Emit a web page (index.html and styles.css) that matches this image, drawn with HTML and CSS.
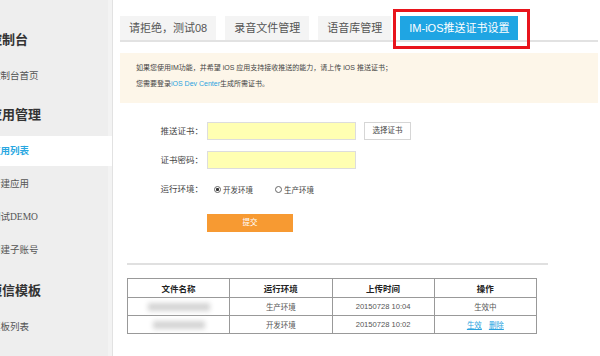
FILE: index.html
```html
<!DOCTYPE html>
<html lang="zh-CN">
<head>
    <meta charset="UTF-8">
    <meta name="viewport" content="width=device-width, initial-scale=1.0">
    <title>IM-iOS推送证书设置</title>
    <link rel="stylesheet" href="styles.css">
</head>
<body>
    <div class="page">
        <div class="sidebar">
            <div class="nav-group">
                <h3 class="nav-title">控制台</h3>
                <a class="nav-item">控制台首页</a>
            </div>
            <div class="nav-group">
                <h3 class="nav-title">应用管理</h3>
                <a class="nav-item active">应用列表</a>
                <a class="nav-item">新建应用</a>
                <a class="nav-item">测试DEMO</a>
                <a class="nav-item">创建子账号</a>
            </div>
            <div class="nav-group">
                <h3 class="nav-title">短信模板</h3>
                <a class="nav-item">模板列表</a>
            </div>
        </div>

        <div class="main">
            <div class="tabs">
                <span class="tab">请拒绝，测试08</span>
                <span class="tab">录音文件管理</span>
                <span class="tab">语音库管理</span>
                <span class="tab tab-active">IM-iOS推送证书设置<span class="mark"></span></span>
            </div>

            <div class="notice">
                <p>如果您使用IM功能，并希望 iOS 应用支持接收推送的能力，请上传 iOS 推送证书；</p>
                <p>您需要登录<a class="link">iOS Dev Center</a>生成所需证书。</p>
            </div>

            <div class="cert-form">
                <label class="form-label">推送证书：</label>
                <div class="form-field">
                    <span class="text-input"></span>
                    <span class="pick-button">选择证书</span>
                </div>
                <label class="form-label">证书密码：</label>
                <div class="form-field">
                    <span class="text-input"></span>
                </div>
                <label class="form-label">运行环境：</label>
                <div class="form-field radios">
                    <span class="radio"><span class="radio-dot checked"></span>开发环境</span>
                    <span class="radio"><span class="radio-dot"></span>生产环境</span>
                </div>
                <span></span>
                <div class="form-field submit-row">
                    <span class="submit-button">提交</span>
                </div>
            </div>

            <div class="divider"></div>

            <table class="cert-table">
                <tr>
                    <th>文件名称</th>
                    <th>运行环境</th>
                    <th>上传时间</th>
                    <th>操作</th>
                </tr>
                <tr>
                    <td><span class="blurred wide"></span></td>
                    <td>生产环境</td>
                    <td class="num">20150728 10:04</td>
                    <td>生效中</td>
                </tr>
                <tr>
                    <td><span class="blurred"></span></td>
                    <td>开发环境</td>
                    <td class="num">20150728 10:02</td>
                    <td><a class="link underline">生效</a><a class="link underline">删除</a></td>
                </tr>
            </table>
        </div>
    </div>
</body>
</html>
```

FILE: styles.css
```css
body {
    margin: 0;
    background: #fff;
    font-family: "Liberation Sans", "Noto Sans CJK SC", sans-serif;
    color: #555;
}

.page {
    display: flex;
    width: 600px;
    height: 356px;
    overflow: hidden;
}

/* left menu, scrolled a little off screen */
.sidebar {
    width: 112px;
    flex-shrink: 0;
    padding-top: 30px;
    background: linear-gradient(to right, #eeeeee 108px, #f3f3f3 108px);
    border-right: 1px solid #e2e2e2;
    overflow: hidden;
}

.nav-group + .nav-group {
    margin-top: 14px;
}

.nav-group:last-child {
    margin-top: 16px;
}

.nav-title {
    margin: 0 0 11px -11px;
    height: 20px;
    line-height: 20px;
    font-size: 13px;
    font-weight: bold;
    color: #333;
    white-space: nowrap;
}

.nav-item {
    display: block;
    height: 30px;
    line-height: 30px;
    margin-bottom: 3px;
    text-indent: -9px;
    font-family: "Liberation Serif", "Noto Sans CJK SC", serif;
    font-size: 9.5px;
    color: #555;
    white-space: nowrap;
}

.nav-item.active {
    background: #fff;
    color: #29a7e1;
    font-weight: bold;
}

.main {
    flex: 1;
    padding: 16px 2px 0 7px;
}

.tabs {
    display: flex;
    gap: 9px;
    border-bottom: 2px solid #e2e2e2;
}

.tab {
    position: relative;
    height: 24px;
    line-height: 24px;
    padding: 0 9px;
    font-size: 11px;
    color: #555;
    background: #f4f4f4;
    white-space: nowrap;
}

.tab-active {
    background: #1fa5e3;
    color: #fff;
}

/* red annotation box */
.mark {
    position: absolute;
    left: -7px;
    top: -7px;
    right: -12px;
    bottom: -9px;
    border: 3px solid #e8141c;
}

.notice {
    margin-top: 11px;
    height: 50px;
    box-sizing: border-box;
    padding: 7px 0 0 16px;
    background: #fdf6e9;
    font-size: 7px;
    color: #444;
}

.notice p {
    margin: 0;
    line-height: 16px;
}

.link {
    color: #2aa3e0;
}

.underline {
    text-decoration: underline;
}

.cert-form {
    display: grid;
    grid-template-columns: 83px auto;
    column-gap: 4px;
    row-gap: 11px;
    margin-top: 19px;
}

.form-label {
    text-align: right;
    line-height: 18px;
    font-size: 8.5px;
    color: #444;
}

.form-field {
    display: flex;
    align-items: center;
    height: 18px;
}

.text-input {
    width: 149px;
    height: 18px;
    box-sizing: border-box;
    border: 1px solid #ddd;
    background: #ffffb2;
}

.pick-button {
    margin-left: 8px;
    width: 47px;
    height: 18px;
    box-sizing: border-box;
    border: 1px solid #d6d6d6;
    background: #fff;
    font-size: 7.5px;
    line-height: 16px;
    text-align: center;
    color: #444;
}

.radios {
    gap: 22px;
    padding-left: 7px;
}

.radio {
    display: flex;
    align-items: center;
    gap: 2px;
    font-size: 7.5px;
    color: #444;
}

.radio-dot {
    width: 5px;
    height: 5px;
    border: 1px solid #666;
    border-radius: 50%;
    background: #fff;
}

.radio-dot.checked {
    background: radial-gradient(circle, #333 1.3px, #fff 1.8px);
}

.submit-row {
    margin-top: 5px;
}

.submit-button {
    width: 86px;
    height: 18px;
    line-height: 18px;
    background: #f79a32;
    color: #fff;
    text-align: center;
    font-size: 7.5px;
}

.divider {
    margin: 31px 0 0 7px;
    width: 421px;
    height: 2px;
    background: #e0e0e0;
}

.cert-table {
    margin: 13px 0 0 7px;
    width: 410px;
    border-collapse: collapse;
    table-layout: fixed;
}

.cert-table th,
.cert-table td {
    border: 1px solid #999;
    padding: 0;
    text-align: center;
    font-size: 7.5px;
    color: #555;
}

.cert-table th {
    height: 18px;
    font-size: 8.5px;
    color: #222;
}

.cert-table td {
    height: 17px;
}

.cert-table .num {
    font-size: 7.6px;
}

.cert-table .link + .link {
    margin-left: 7px;
}

.blurred {
    display: inline-block;
    width: 52px;
    height: 8px;
    background: #d4d4d4;
    filter: blur(2.5px);
    vertical-align: middle;
}

.blurred.wide {
    width: 62px;
}
```
